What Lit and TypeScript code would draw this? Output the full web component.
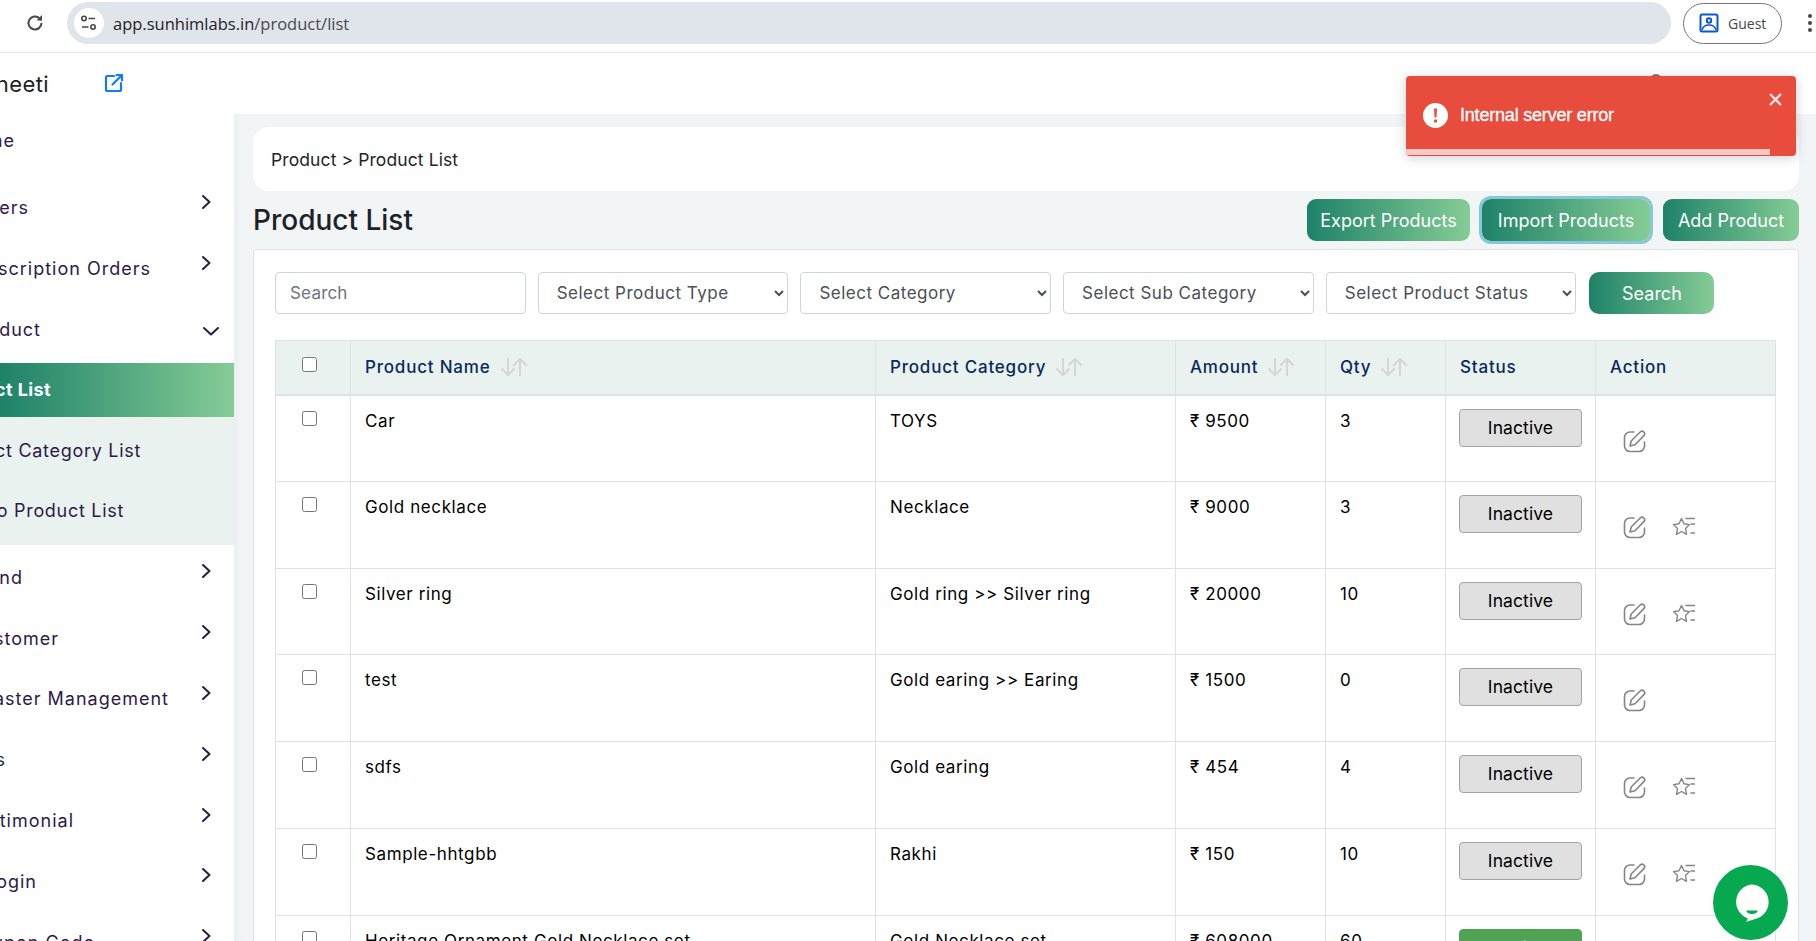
import { LitElement, css, html, nothing, svg } from 'lit';
import { customElement } from 'lit/decorators.js';

type NavItem = { label: string; end: number; chevron?: boolean };
type Row = { name: string; category: string; amount: string; qty: string; star: boolean; active?: boolean };

const TOP_ITEMS: NavItem[] = [
  { label: 'Orders', end: 29, chevron: true },
  { label: 'Subscription Orders', end: 151, chevron: true },
];

const SUB_ITEMS: NavItem[] = [
  { label: 'Product Category List', end: 141 },
  { label: 'Combo Product List', end: 124 },
];

const BOTTOM_ITEMS: NavItem[] = [
  { label: 'Brand', end: 23, chevron: true },
  { label: 'Customer', end: 59, chevron: true },
  { label: 'Master Management', end: 169, chevron: true },
  { label: 'Blogs', end: 6, chevron: true },
  { label: 'Testimonial', end: 74, chevron: true },
  { label: 'Login', end: 37, chevron: true },
  { label: 'Coupon Code', end: 95, chevron: true },
];

const ROWS: Row[] = [
  { name: 'Car', category: 'TOYS', amount: '₹ 9500', qty: '3', star: false },
  { name: 'Gold necklace', category: 'Necklace', amount: '₹ 9000', qty: '3', star: true },
  { name: 'Silver ring', category: 'Gold ring >> Silver ring', amount: '₹ 20000', qty: '10', star: true },
  { name: 'test', category: 'Gold earing >> Earing', amount: '₹ 1500', qty: '0', star: false },
  { name: 'sdfs', category: 'Gold earing', amount: '₹ 454', qty: '4', star: true },
  { name: 'Sample-hhtgbb', category: 'Rakhi', amount: '₹ 150', qty: '10', star: true },
  { name: 'Heritage Ornament Gold Necklace set', category: 'Gold Necklace set', amount: '₹ 608000', qty: '60', star: true, active: true },
];

const chevronRight = svg`<svg class="chev" width="12" height="18" viewBox="0 0 12 18" fill="none" stroke="#2d1a4a" stroke-width="2" stroke-linecap="round" stroke-linejoin="round"><path d="M3 3l6.5 6L3 15"/></svg>`;
const chevronDown = svg`<svg class="chev down" width="18" height="12" viewBox="0 0 18 12" fill="none" stroke="#2d1a4a" stroke-width="2" stroke-linecap="round" stroke-linejoin="round"><path d="M2 3l7 6.5L16 3"/></svg>`;
const sortIcon = svg`<svg class="sort" width="28" height="20" viewBox="0 0 28 20" fill="none" stroke="#d6d6d6" stroke-width="2"><path d="M8 1v17M1.5 11.5L8 18l6.500-6.500"/><path d="M20 19V2M13.500 8.500L20 2l6.500 6.500"/></svg>`;
const editIcon = svg`<svg width="24" height="24" viewBox="0 0 24 24" fill="none" stroke="#858585" stroke-width="1.600" stroke-linecap="round" stroke-linejoin="round"><path d="M11 3H7a5.500 5.500 0 0 0-5.500 5.500v8.500A5.500 5.500 0 0 0 7 22.500h9a5.500 5.500 0 0 0 5.500-5.500v-4"/><path d="M7 17l1.200-5L17.400 2.800a2.600 2.600 0 0 1 3.700 3.600L12 15.800z"/></svg>`;
const starIcon = svg`<svg width="22" height="20" viewBox="0 0 22 20" fill="none" stroke="#858585" stroke-width="1.400" stroke-linejoin="round" stroke-linecap="round"><path d="M8.500 1.500l2.500 5.300 5.500.8-4 4 1 5.700-5-2.800-5 2.800 1-5.700-4-4 5.500-.8z"/><path d="M13 1.500h9M18 7H22M18 16H22"/></svg>`;

@customElement('app-root')
export class AppRoot extends LitElement {
  static styles = css`
    :host {
      display: flex;
      flex-direction: column;
      position: relative;
      width: 1816px;
      height: 941px;
      overflow: hidden;
      background: #fff;
      font-family: Inter, "Noto Sans", sans-serif;
      color: #000;
    }

    .browser {
      flex: none;
      display: flex;
      align-items: center;
      box-sizing: border-box;
      height: 53px;
      padding-bottom: 6px;
      border-bottom: 1px solid #e4e6e9;
      font-family: "Open Sans", sans-serif;
    }

    .reload {
      margin-left: 24px;
      margin-right: 21px;
      flex: none;
    }

    .omnibox {
      flex: none;
      display: flex;
      align-items: center;
      width: 1604px;
      height: 42px;
      border-radius: 21px;
      background: #e0e4eb;
      box-sizing: border-box;
      padding-left: 7px;
      font-size: 16.500px;
      color: #474a4d;
    }

    .tune {
      display: flex;
      align-items: center;
      justify-content: center;
      width: 30px;
      height: 30px;
      border-radius: 50%;
      background: #fff;
      margin-right: 9px;
    }

    .host-name {
      color: #1f1f1f;
    }

    .guest {
      flex: none;
      display: flex;
      align-items: center;
      gap: 9px;
      box-sizing: border-box;
      width: 99px;
      height: 41px;
      margin-left: 12px;
      padding-left: 15px;
      border: 1px solid #747775;
      border-radius: 21px;
      font-size: 14px;
      color: #474747;
    }

    .dots {
      display: flex;
      flex-direction: column;
      gap: 3px;
      margin-left: 26px;
    }

    .dots i {
      width: 4px;
      height: 4px;
      border-radius: 50%;
      background: #474747;
    }

    .topbar {
      flex: none;
      display: flex;
      align-items: flex-start;
      height: 61px;
      box-sizing: border-box;
      padding-top: 21px;
    }

    .brand {
      display: flex;
      justify-content: flex-end;
      width: 49px;
      flex: none;
      white-space: nowrap;
      font-size: 22px;
      letter-spacing: 0.400px;
      line-height: 24px;
      margin-top: -2px;
      color: #222;
    }

    .open-link {
      margin: -1px 0 0 55px;
    }

    .avatar {
      width: 12px;
      height: 12px;
      border-radius: 50%;
      background: #777;
      margin-left: auto;
      margin-right: 154px;
    }

    .body {
      flex: 1;
      display: flex;
      min-height: 0;
    }

    .sidebar {
      flex: none;
      width: 234px;
      overflow: hidden;
      font-size: 18px;
      letter-spacing: 1px;
      color: #2d1a4a;
    }

    .item {
      display: flex;
      align-items: center;
      height: 61px;
      padding-right: 22px;
      white-space: nowrap;
    }

    .item.home {
      height: 52px;
      margin-bottom: 11px;
    }

    .label {
      flex: none;
      display: flex;
      justify-content: flex-end;
    }

    .chev {
      flex: none;
      margin-left: auto;
      margin-bottom: 12px;
    }

    .chev.down {
      margin-bottom: -2px;
      margin-right: -8px;
    }

    .submenu {
      margin-top: 3px;
      margin-bottom: 2px;
      padding-bottom: 5px;
      background: #e9f2ef;
      letter-spacing: 0.700px;
    }

    .submenu .item {
      height: 60px;
    }

    .submenu .item:first-child {
      height: 54px;
      margin-bottom: 3px;
      padding-bottom: 2px;
      box-sizing: border-box;
      background: linear-gradient(90deg, #1e8268, #85cc96);
      color: #fff;
      font-weight: 700;
      letter-spacing: 0.400px;
    }

    .submenu ~ .item {
      height: 60.800px;
    }

    .main {
      flex: 1;
      min-width: 0;
      box-sizing: border-box;
      padding: 13px 17px 0 19px;
      background: #f1f5f6;
      box-shadow: inset 8px 0 10px -8px rgba(0, 0, 0, 0.06);
    }

    .crumbs {
      display: flex;
      align-items: center;
      height: 64px;
      padding-left: 18px;
      border-radius: 16px;
      background: #fff;
      font-size: 17.500px;
      letter-spacing: 0.100px;
      color: #212529;
    }

    .title-row {
      display: flex;
      align-items: center;
      margin-top: 8px;
      height: 42px;
    }

    h1 {
      margin: 0 auto 0 0;
      font-size: 28px;
      font-weight: 500;
      color: #1c2228;
    }

    .btn {
      display: flex;
      align-items: center;
      justify-content: center;
      box-sizing: border-box;
      height: 42px;
      border: 0;
      border-radius: 9px;
      background: linear-gradient(90deg, #1e8268, #85cc96);
      font: inherit;
      font-size: 18px;
      color: #fff;
    }

    .btn.export {
      width: 163px;
    }

    .btn.import {
      width: 168px;
      margin: 0 13px 0 12px;
      box-shadow: 0 0 0 3px #86c8d9;
    }

    .btn.add {
      width: 136px;
    }

    .card {
      margin-top: 8px;
      height: 700px;
      box-sizing: border-box;
      padding: 22px 23px 0 21px;
      background: #fff;
      border: 1px solid #dee2e6;
      border-radius: 4px;
    }

    .filters {
      display: flex;
      gap: 12.100px;
      height: 42px;
    }

    .field {
      box-sizing: border-box;
      width: 250.600px;
      height: 42px;
      border: 1px solid #ced4da;
      border-radius: 4px;
      background: #fff;
      font: inherit;
      font-size: 17px;
      color: #495057;
    }

    input.field {
      padding: 0 14px;
      letter-spacing: 0.200px;
    }

    input.field::placeholder {
      color: #6c757d;
    }

    select.field {
      padding: 0 10px 0 14px;
      letter-spacing: 0.500px;
    }

    .btn.find {
      width: 125px;
      margin-left: 1px;
      border-radius: 10px;
    }

    table {
      width: 1500px;
      margin-top: 26px;
      table-layout: fixed;
      border-collapse: collapse;
      font-size: 17px;
    }

    th {
      height: 54px;
      box-sizing: border-box;
      padding: 0 14px;
      border: 1px solid #dee2e6;
      border-bottom-width: 2px;
      background: #e9f2ef;
      color: #0a2a5c;
      font-weight: 500;
      letter-spacing: 0.800px;
      text-align: left;
    }

    th .head {
      display: flex;
      align-items: center;
      gap: 9px;
    }

    td {
      height: 86.830px;
      box-sizing: border-box;
      padding: 13px 14px 0;
      border: 1px solid #dee2e6;
      letter-spacing: 0.600px;
      line-height: 24px;
      vertical-align: top;
    }

    td.check,
    th.check {
      padding: 0 8px 0 0;
      text-align: center;
    }

    td.check {
      padding-top: 15px;
    }

    th.check input {
      margin: 0 0 6px;
    }

    .check input {
      width: 15px;
      height: 15px;
      margin: 0;
      vertical-align: top;
    }

    .pill {
      display: flex;
      align-items: center;
      justify-content: center;
      box-sizing: border-box;
      width: 123px;
      height: 38px;
      margin: 0 0 0 -1px;
      border: 1px solid #a4a4a4;
      border-radius: 4px;
      background: #e0e0e0;
      font-size: 17.500px;
      letter-spacing: 0.100px;
    }

    .pill.on {
      border-color: #4fa352;
      background: #4fa352;
      color: #fff;
    }

    .actions {
      display: flex;
      align-items: center;
      gap: 26px;
      margin: 20px 0 0 13px;
    }

    .toast {
      position: absolute;
      left: 1406px;
      top: 76px;
      width: 390px;
      height: 80px;
      display: flex;
      align-items: center;
      box-sizing: border-box;
      padding: 0 0 2px 17px;
      border-radius: 4px;
      background: #e74c3c;
      box-shadow: 0 2px 12px rgba(0, 0, 0, 0.18);
      font-family: "Liberation Sans", Arial, sans-serif;
      font-size: 18px;
      letter-spacing: -0.200px;
      -webkit-text-stroke: 0.300px #fff;
      color: #fff;
      overflow: hidden;
    }

    .toast-text {
      margin-left: 12px;
    }

    .toast-close {
      position: absolute;
      right: 14px;
      top: 17px;
    }

    .toast-bar {
      position: absolute;
      left: 0;
      bottom: 1px;
      height: 6px;
      background: rgba(255, 255, 255, 0.7);
    }

    .chat {
      position: absolute;
      left: 1713px;
      top: 865px;
      width: 75px;
      height: 75px;
      border-radius: 50%;
      background: #06a94f;
      display: flex;
      align-items: center;
      justify-content: center;
    }
  `;

  private renderItem(item: NavItem) {
    return html`<div class="item">
      <span class="label" style="width:${item.end}px">${item.label}</span>
      ${item.chevron ? chevronRight : nothing}
    </div>`;
  }

  private renderRow(row: Row) {
    return html`<tr>
      <td class="check"><input type="checkbox" /></td>
      <td>${row.name}</td>
      <td>${row.category}</td>
      <td>${row.amount}</td>
      <td>${row.qty}</td>
      <td><div class="pill ${row.active ? 'on' : ''}">${row.active ? 'Active' : 'Inactive'}</div></td>
      <td>
        <div class="actions">${editIcon}${row.star ? starIcon : nothing}</div>
      </td>
    </tr>`;
  }

  render() {
    return html`
      <div class="browser">
        <svg class="reload" width="22" height="22" viewBox="0 0 22 22" fill="none" stroke="#474747" stroke-width="2"><path d="M17.500 11a6.500 6.500 0 1 1-2-4.700L17.500 8"/><path d="M18 3v5.500h-5.500" fill="#474747" stroke="none"/></svg>
        <div class="omnibox">
          <span class="tune">
            <svg width="18" height="16" viewBox="0 0 18 16" fill="none" stroke="#474747" stroke-width="1.600"><circle cx="4" cy="3.500" r="2.200"/><path d="M8.500 3.500H15M2 12h6.500"/><circle cx="13" cy="12" r="2.200"/></svg>
          </span>
          <span><span class="host-name">app.sunhimlabs.in</span>/product/list</span>
        </div>
        <div class="guest">
          <svg width="20" height="20" viewBox="0 0 20 20" fill="none" stroke="#0b57d0" stroke-width="2"><rect x="1.500" y="1.500" width="17" height="17" rx="1.500"/><circle cx="10" cy="7.500" r="2.200"/><path d="M3 17c1-4 4-5 7-5s6 1 7 5" stroke-width="1.600"/></svg>
          Guest
        </div>
        <div class="dots"><i></i><i></i><i></i></div>
      </div>

      <div class="topbar">
        <span class="brand">Suneeti</span>
        <svg class="open-link" width="20" height="20" viewBox="0 0 20 20" fill="none" stroke="#0d7cff" stroke-width="2.200" stroke-linecap="round" stroke-linejoin="round"><path d="M10 3H3.500A1.500 1.500 0 0 0 2 4.500v12A1.500 1.500 0 0 0 3.500 18h12a1.500 1.500 0 0 0 1.500-1.500V10"/><path d="M8.500 11.500L18 2M12.500 2H18v5.500"/></svg>
        <span class="avatar"></span>
      </div>

      <div class="body">
        <nav class="sidebar">
          <div class="item home"><span class="label" style="width:15px">Home</span></div>
          ${TOP_ITEMS.map((item) => this.renderItem(item))}
          <div class="item"><span class="label" style="width:41px">Product</span>${chevronDown}</div>
          <div class="submenu">
            ${this.renderItem({ label: 'Product List', end: 51 })}
            ${SUB_ITEMS.map((item) => this.renderItem(item))}
          </div>
          ${BOTTOM_ITEMS.map((item) => this.renderItem(item))}
        </nav>

        <main class="main">
          <div class="crumbs">Product &gt; Product List</div>
          <div class="title-row">
            <h1>Product List</h1>
            <button class="btn export">Export Products</button>
            <button class="btn import">Import Products</button>
            <button class="btn add">Add Product</button>
          </div>
          <section class="card">
            <div class="filters">
              <input class="field" placeholder="Search" />
              <select class="field"><option>Select Product Type</option></select>
              <select class="field"><option>Select Category</option></select>
              <select class="field"><option>Select Sub Category</option></select>
              <select class="field"><option>Select Product Status</option></select>
              <button class="btn find">Search</button>
            </div>
            <table>
              <colgroup>
                <col style="width:75px" />
                <col style="width:525px" />
                <col style="width:300px" />
                <col style="width:150px" />
                <col style="width:120px" />
                <col style="width:150px" />
                <col style="width:180px" />
              </colgroup>
              <thead>
                <tr>
                  <th class="check"><input type="checkbox" /></th>
                  <th><div class="head">Product Name ${sortIcon}</div></th>
                  <th><div class="head">Product Category ${sortIcon}</div></th>
                  <th><div class="head">Amount ${sortIcon}</div></th>
                  <th><div class="head">Qty ${sortIcon}</div></th>
                  <th>Status</th>
                  <th>Action</th>
                </tr>
              </thead>
              <tbody>${ROWS.map((row) => this.renderRow(row))}</tbody>
            </table>
          </section>
        </main>
      </div>

      <div class="toast" role="alert">
        <svg width="25" height="25" viewBox="0 0 25 25"><circle cx="12.500" cy="12.500" r="12.500" fill="#fff"/><path d="M11 5.500h3l-.5 9h-2z" fill="#e74c3c"/><circle cx="12.500" cy="18" r="1.700" fill="#e74c3c"/></svg>
        <span class="toast-text">Internal server error</span>
        <svg class="toast-close" width="13" height="13" viewBox="0 0 13 13" stroke="#fbe3e0" stroke-width="2.400"><path d="M1 1l11 11M12 1L1 12"/></svg>
        <span class="toast-bar" style="width:${(364 / 390) * 100}%"></span>
      </div>

      <div class="chat">
        <svg width="40" height="42" viewBox="0 0 40 42"><path d="M20 2.500a17.500 17.500 0 0 1 5 34.300c-3 1-6 2-10 3.200 1-1.500 1.500-3 1.500-3.800A17.500 17.500 0 0 1 20 2.500z" fill="#fff"/><path d="M15 28.500h12c-1 2.500-3 3.500-6 3.500s-5-1-6-3.500z" fill="#06a94f"/></svg>
      </div>
    `;
  }
}
